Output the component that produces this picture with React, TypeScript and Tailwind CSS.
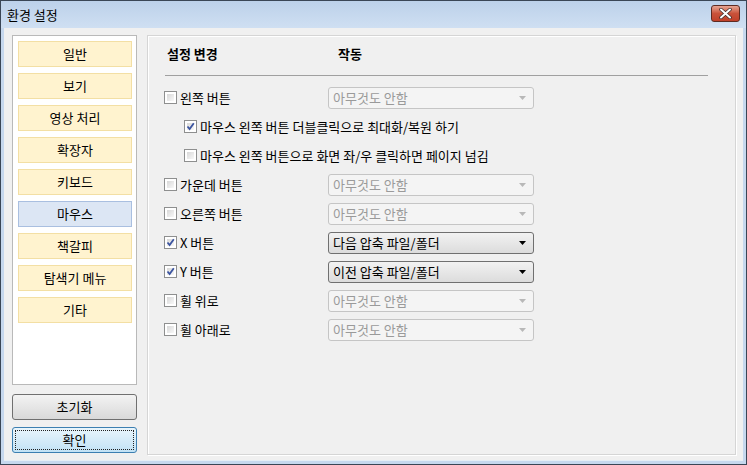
import React from "react"

const font = { fontFamily: '"Noto Sans CJK KR", "Noto Sans", sans-serif' }

const menu = ["일반", "보기", "영상 처리", "확장자", "키보드", "마우스", "책갈피", "탐색기 메뉴", "기타"]

function CheckBox({ checked }: { checked?: boolean }) {
  return (
    <span className="relative w-[13px] h-[13px] shrink-0 border border-[#8e8f8f] bg-white">
      <span className="absolute inset-[2px] bg-gradient-to-br from-[#d8d8d8] to-[#f8f8f8]" />
      {checked && (
        <svg className="absolute left-[1px] top-[1px]" width="9" height="9" viewBox="0 0 9 9">
          <path d="M1.5 4.5 L3.6 7 L7.8 1.2" fill="none" stroke="#3b54a0" strokeWidth="1.8" />
        </svg>
      )}
    </span>
  )
}

function Combo({ text, enabled }: { text: string; enabled?: boolean }) {
  return (
    <div
      className={
        enabled
          ? "w-[206px] h-[22px] rounded-[3px] border border-[#707070] bg-gradient-to-b from-[#f2f2f2] to-[#dcdcdc] flex items-center pl-[4px] pr-[7px] text-[13px] text-black"
          : "w-[206px] h-[22px] rounded-[3px] border border-[#c5c5c5] bg-[#f4f4f4] flex items-center pl-[4px] pr-[7px] text-[13px] text-[#9a9a9a]"
      }
    >
      <span className="flex-1">{text}</span>
      <svg width="7" height="4" viewBox="0 0 7 4">
        <path d="M0 0 L7 0 L3.5 4 Z" fill={enabled ? "#000" : "#b8b8b8"} />
      </svg>
    </div>
  )
}

function Row({ label, checked, combo, enabled }: { label: string; checked?: boolean; combo: string; enabled?: boolean }) {
  return (
    <div className="h-[29px] flex items-center">
      <div className="w-[164px] flex items-center gap-[3px]">
        <CheckBox checked={checked} />
        <span className="text-[13px] text-black">{label}</span>
      </div>
      <Combo text={combo} enabled={enabled} />
    </div>
  )
}

function SubRow({ label, checked }: { label: string; checked?: boolean }) {
  return (
    <div className="h-[29px] flex items-center gap-[3px] pl-[20px]">
      <CheckBox checked={checked} />
      <span className="text-[13px] text-black">{label}</span>
    </div>
  )
}

export default function App() {
  const none = "아무것도 안함"
  return (
    <div
      className="w-[747px] h-[465px] border border-[#3a4656] bg-[#c6d8ee] flex flex-col overflow-hidden"
      style={font}
    >
      {/* title bar */}
      <div className="h-[27px] shrink-0 bg-gradient-to-b from-[#bcd1ea] to-[#cfdff2] flex items-center pl-[6px] pr-[6px]">
        <span className="text-[13px] text-black flex-1">환경 설정</span>
        <div className="w-[29px] h-[17px] mb-[2px] rounded-[3px] border border-[#5e2b22] bg-gradient-to-b from-[#e6a593] via-[#c9523a] to-[#c0402a] flex items-center justify-center">
          <svg width="13" height="11" viewBox="0 0 13 11">
            <path d="M2 1.5 L11 9.5 M11 1.5 L2 9.5" stroke="#3b2a2a" strokeWidth="3.4" strokeLinecap="round" />
            <path d="M2 1.5 L11 9.5 M11 1.5 L2 9.5" stroke="#ffffff" strokeWidth="2" strokeLinecap="round" />
          </svg>
        </div>
      </div>

      {/* client */}
      <div className="flex-1 mx-[3px] mb-[3px] bg-[#f0f0f0] border-b border-[#e6eef5] flex pt-[7px] pl-[8px] pr-[7px] gap-[10px]">
        {/* left column */}
        <div className="w-[125px] flex flex-col pb-[7px]">
          <div className="h-[350px] border border-[#b9b9b9] bg-white flex flex-col gap-[6px] pt-[5px] pl-[5px]">
            {menu.map((m) => (
              <div
                key={m}
                className={
                  m === "마우스"
                    ? "w-[114px] h-[26px] border border-[#a9bfe0] bg-[#dce6f4] flex items-center justify-center text-[13px] text-black"
                    : "w-[114px] h-[26px] border border-[#f3dfa4] bg-[#fff3cf] flex items-center justify-center text-[13px] text-black"
                }
              >
                {m}
              </div>
            ))}
          </div>
          <div className="mt-[9px] h-[26px] rounded-[3px] border border-[#707070] bg-gradient-to-b from-[#f3f3f3] to-[#d9d9d9] flex items-center justify-center text-[13px] text-black">
            초기화
          </div>
          <div className="mt-[7px] h-[26px] rounded-[3px] border border-[#3c7fb1] bg-gradient-to-b from-[#e9f5fc] to-[#c2e2f5] p-[2px]">
            <div className="w-full h-full border border-dotted border-[#222] flex items-center justify-center text-[13px] text-black">
              확인
            </div>
          </div>
        </div>

        {/* right panel */}
        <div className="flex-1 mb-[5px] border border-[#d5d5d5] shadow-[inset_1px_1px_0_#ffffff,1px_1px_0_#ffffff] pl-[16px] pt-[9px]">
          <div className="h-[18px] flex items-center text-[13px] font-bold text-black">
            <span className="w-[174px] pl-[3px]">설정 변경</span>
            <span>작동</span>
          </div>
          <div className="mt-[12px] ml-[1px] w-[543px] h-[1px] bg-[#a0a0a0]" />
          <div className="mt-[7px] flex flex-col">
            <Row label="왼쪽 버튼" combo={none} />
            <SubRow label="마우스 왼쪽 버튼 더블클릭으로 최대화/복원 하기" checked />
            <SubRow label="마우스 왼쪽 버튼으로 화면 좌/우 클릭하면 페이지 넘김" />
            <Row label="가운데 버튼" combo={none} />
            <Row label="오른쪽 버튼" combo={none} />
            <Row label="X 버튼" checked combo="다음 압축 파일/폴더" enabled />
            <Row label="Y 버튼" checked combo="이전 압축 파일/폴더" enabled />
            <Row label="휠 위로" combo={none} />
            <Row label="휠 아래로" combo={none} />
          </div>
        </div>
      </div>
    </div>
  )
}
